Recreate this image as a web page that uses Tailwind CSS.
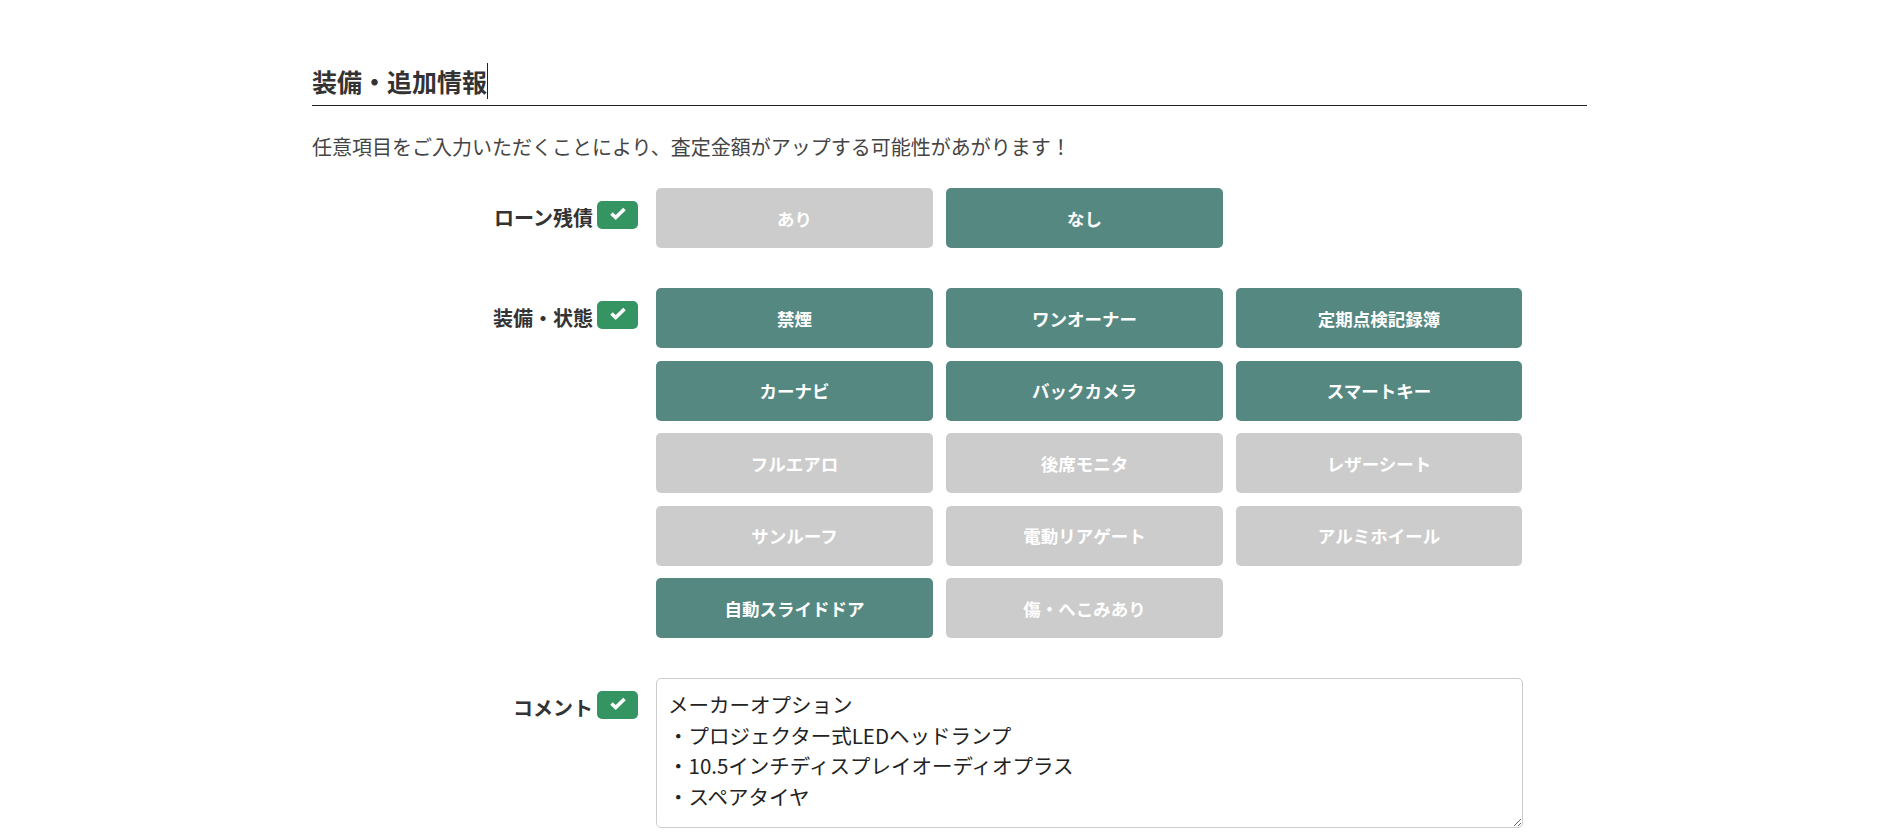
<!DOCTYPE html>
<html lang="ja">
<head>
    <meta charset="UTF-8">
    <title>装備・追加情報</title>
    <script src="https://cdn.jsdelivr.net/npm/@tailwindcss/browser@4"></script>
</head>
<body class="bg-white h-[833px] overflow-hidden font-['Noto_Sans_CJK_JP','Noto_Sans',sans-serif] text-[#333]">
    <div class="ml-[312px] w-[1275px] pt-[63px]">
        <!-- Heading -->
        <div class="h-[43px] border-b border-[#222] flex items-start">
            <h2 class="text-[25px] font-bold leading-[36px]">装備・追加情報</h2>
            <span class="w-px h-[36px] bg-[#222]"></span>
        </div>
        <p class="text-[20px] leading-[30px] mt-[26px] text-[#444]">任意項目をご入力いただくことにより、査定金額がアップする可能性があがります！</p>

        <!-- ローン残債 -->
        <div class="flex mt-[26px]">
            <div class="w-[326px] flex justify-end items-start pt-[13px] gap-[4px] shrink-0">
                <span class="text-[20px] font-bold leading-[30px] mt-[2px]">ローン残債</span>
                <span class="w-[41px] h-[28px] rounded-[5px] bg-[#359562] flex items-center justify-center pb-[3px]">
                    <svg width="16" height="13" viewBox="0 0 16 13"><path d="M1.5 6.5l4.2 4L14.5 2" fill="none" stroke="#fff" stroke-width="3.6"/></svg>
                </span>
            </div>
            <div class="ml-[18px] grid grid-cols-[277px_277px_286px] gap-x-[13px]">
                <button class="h-[60px] pt-[2px] rounded-[5px] bg-[#cccccc] text-white font-bold text-[17.5px]">あり</button>
                <button class="h-[60px] pt-[2px] rounded-[5px] bg-[#568882] text-white font-bold text-[17.5px]">なし</button>
            </div>
        </div>

        <!-- 装備・状態 -->
        <div class="flex mt-[40px]">
            <div class="w-[326px] flex justify-end items-start pt-[13px] gap-[4px] shrink-0">
                <span class="text-[20px] font-bold leading-[30px] mt-[2px]">装備・状態</span>
                <span class="w-[41px] h-[28px] rounded-[5px] bg-[#359562] flex items-center justify-center pb-[3px]">
                    <svg width="16" height="13" viewBox="0 0 16 13"><path d="M1.5 6.5l4.2 4L14.5 2" fill="none" stroke="#fff" stroke-width="3.6"/></svg>
                </span>
            </div>
            <div class="ml-[18px] grid grid-cols-[277px_277px_286px] gap-x-[13px] gap-y-[12.5px]">
                <button class="h-[60px] pt-[2px] rounded-[5px] bg-[#568882] text-white font-bold text-[17.5px]">禁煙</button>
                <button class="h-[60px] pt-[2px] rounded-[5px] bg-[#568882] text-white font-bold text-[17.5px]">ワンオーナー</button>
                <button class="h-[60px] pt-[2px] rounded-[5px] bg-[#568882] text-white font-bold text-[17.5px]">定期点検記録簿</button>
                <button class="h-[60px] pt-[2px] rounded-[5px] bg-[#568882] text-white font-bold text-[17.5px]">カーナビ</button>
                <button class="h-[60px] pt-[2px] rounded-[5px] bg-[#568882] text-white font-bold text-[17.5px]">バックカメラ</button>
                <button class="h-[60px] pt-[2px] rounded-[5px] bg-[#568882] text-white font-bold text-[17.5px]">スマートキー</button>
                <button class="h-[60px] pt-[2px] rounded-[5px] bg-[#cccccc] text-white font-bold text-[17.5px]">フルエアロ</button>
                <button class="h-[60px] pt-[2px] rounded-[5px] bg-[#cccccc] text-white font-bold text-[17.5px]">後席モニタ</button>
                <button class="h-[60px] pt-[2px] rounded-[5px] bg-[#cccccc] text-white font-bold text-[17.5px]">レザーシート</button>
                <button class="h-[60px] pt-[2px] rounded-[5px] bg-[#cccccc] text-white font-bold text-[17.5px]">サンルーフ</button>
                <button class="h-[60px] pt-[2px] rounded-[5px] bg-[#cccccc] text-white font-bold text-[17.5px]">電動リアゲート</button>
                <button class="h-[60px] pt-[2px] rounded-[5px] bg-[#cccccc] text-white font-bold text-[17.5px]">アルミホイール</button>
                <button class="h-[60px] pt-[2px] rounded-[5px] bg-[#568882] text-white font-bold text-[17.5px]">自動スライドドア</button>
                <button class="h-[60px] pt-[2px] rounded-[5px] bg-[#cccccc] text-white font-bold text-[17.5px]">傷・へこみあり</button>
            </div>
        </div>

        <!-- コメント -->
        <div class="flex mt-[40px]">
            <div class="w-[326px] flex justify-end items-start pt-[13px] gap-[4px] shrink-0">
                <span class="text-[20px] font-bold leading-[30px] mt-[2px]">コメント</span>
                <span class="w-[41px] h-[28px] rounded-[5px] bg-[#359562] flex items-center justify-center pb-[3px]">
                    <svg width="16" height="13" viewBox="0 0 16 13"><path d="M1.5 6.5l4.2 4L14.5 2" fill="none" stroke="#fff" stroke-width="3.6"/></svg>
                </span>
            </div>
            <textarea class="ml-[18px] w-[867px] h-[150px] block border border-[#ccc] rounded-[5px] pl-[11px] pr-[13px] pt-[10px] text-[20.5px] leading-[30.5px] text-[#222] outline-none">メーカーオプション
・プロジェクター式LEDヘッドランプ
・10.5インチディスプレイオーディオプラス
・スペアタイヤ</textarea>
        </div>
    </div>
</body>
</html>
